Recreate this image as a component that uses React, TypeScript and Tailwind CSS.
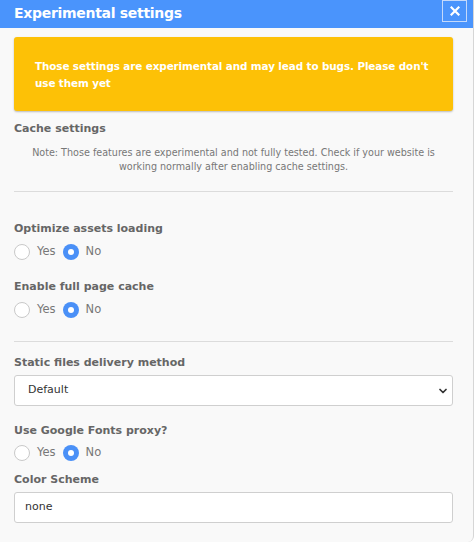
import { ChevronDown } from "lucide-react";

// Experimental settings panel — single-file recreation

function Radio({ checked, label }: { checked?: boolean; label: string }) {
  return (
    <label className="flex items-center gap-[7px] mr-[7px]">
      {checked ? (
        <span className="w-4 h-4 rounded-full bg-[#4a90f7] flex items-center justify-center">
          <span className="w-[6px] h-[6px] rounded-full bg-white" />
        </span>
      ) : (
        <span className="w-4 h-4 rounded-full border border-[#c9c9c9] bg-white" />
      )}
      <span className="text-[11.5px] text-[#777]">{label}</span>
    </label>
  );
}

function YesNo({ top }: { top: string }) {
  return (
    <div className={`flex items-center h-4 ${top}`}>
      <Radio label="Yes" />
      <Radio label="No" checked />
    </div>
  );
}

function FieldLabel({ children }: { children: React.ReactNode }) {
  return <div className="text-[11px] font-bold text-[#666] leading-[15px]">{children}</div>;
}

export default function App() {
  return (
    <div className="w-[475px] h-[544px] bg-white" style={{ fontFamily: "'DejaVu Sans', sans-serif" }}>
      <div className="w-[474px] h-[542px] bg-[#f9f9f9] border-r border-[#d6d6d6] rounded-br-[6px] overflow-hidden">
        {/* header */}
        <div className="h-[28px] bg-[#4a94fc] flex items-start justify-between pl-[14px] pr-[6px]">
          <span className="text-white font-bold text-[14px] tracking-[-0.3px] leading-[26px]">Experimental settings</span>
          <button className="w-[25px] h-[22px] border border-[#c4d9fb] flex items-center justify-center text-white">
            <svg width="10" height="10" viewBox="0 0 10 10">
              <path d="M1.5 1.5L8.5 8.5M8.5 1.5L1.5 8.5" stroke="white" strokeWidth="2.2" strokeLinecap="square" />
            </svg>
          </button>
        </div>

        <div className="pl-[14px] pr-[20px] pt-[9px]">
          {/* warning */}
          <div className="h-[74px] bg-[#fdc106] rounded-[3px] shadow-[0_1px_2px_rgba(0,0,0,0.25)] pl-[21px] pr-[6px] pt-[21px]">
            <p className="text-white font-bold text-[10.4px] tracking-[-0.1px] leading-[17px]">
              Those settings are experimental and may lead to bugs. Please don't use them yet
            </p>
          </div>

          {/* cache settings */}
          <div className="mt-[10px]">
            <FieldLabel>Cache settings</FieldLabel>
            <p className="mt-[10px] text-center text-[9.6px] leading-[14px] text-[#777]">
              Note: Those features are experimental and not fully tested. Check if your website is working normally
              after enabling cache settings.
            </p>
          </div>
          <div className="mt-[17px] border-t border-[#dcdcdc]" />

          <div className="mt-[29px]">
            <FieldLabel>Optimize assets loading</FieldLabel>
            <YesNo top="mt-[8px]" />
          </div>
          <div className="mt-[19px]">
            <FieldLabel>Enable full page cache</FieldLabel>
            <YesNo top="mt-[8px]" />
          </div>
          <div className="mt-[23px] border-t border-[#dcdcdc]" />

          <div className="mt-[13px]">
            <FieldLabel>Static files delivery method</FieldLabel>
            <div className="mt-[5px] h-[31px] bg-white border border-[#cfcfcf] rounded-[3px] flex items-center justify-between pl-[13px] pr-[3px]">
              <span className="text-[11px] text-[#333]">Default</span>
              <ChevronDown size={12} strokeWidth={3.5} className="text-[#333]" />
            </div>
          </div>

          <div className="mt-[17px]">
            <FieldLabel>Use Google Fonts proxy?</FieldLabel>
            <YesNo top="mt-[7px]" />
          </div>

          <div className="mt-[11px]">
            <FieldLabel>Color Scheme</FieldLabel>
            <div className="mt-[5px] h-[31px] bg-white border border-[#cfcfcf] rounded-[3px] flex items-center pl-[10px]">
              <span className="text-[11px] text-[#333]">none</span>
            </div>
          </div>
        </div>
      </div>
    </div>
  );
}
